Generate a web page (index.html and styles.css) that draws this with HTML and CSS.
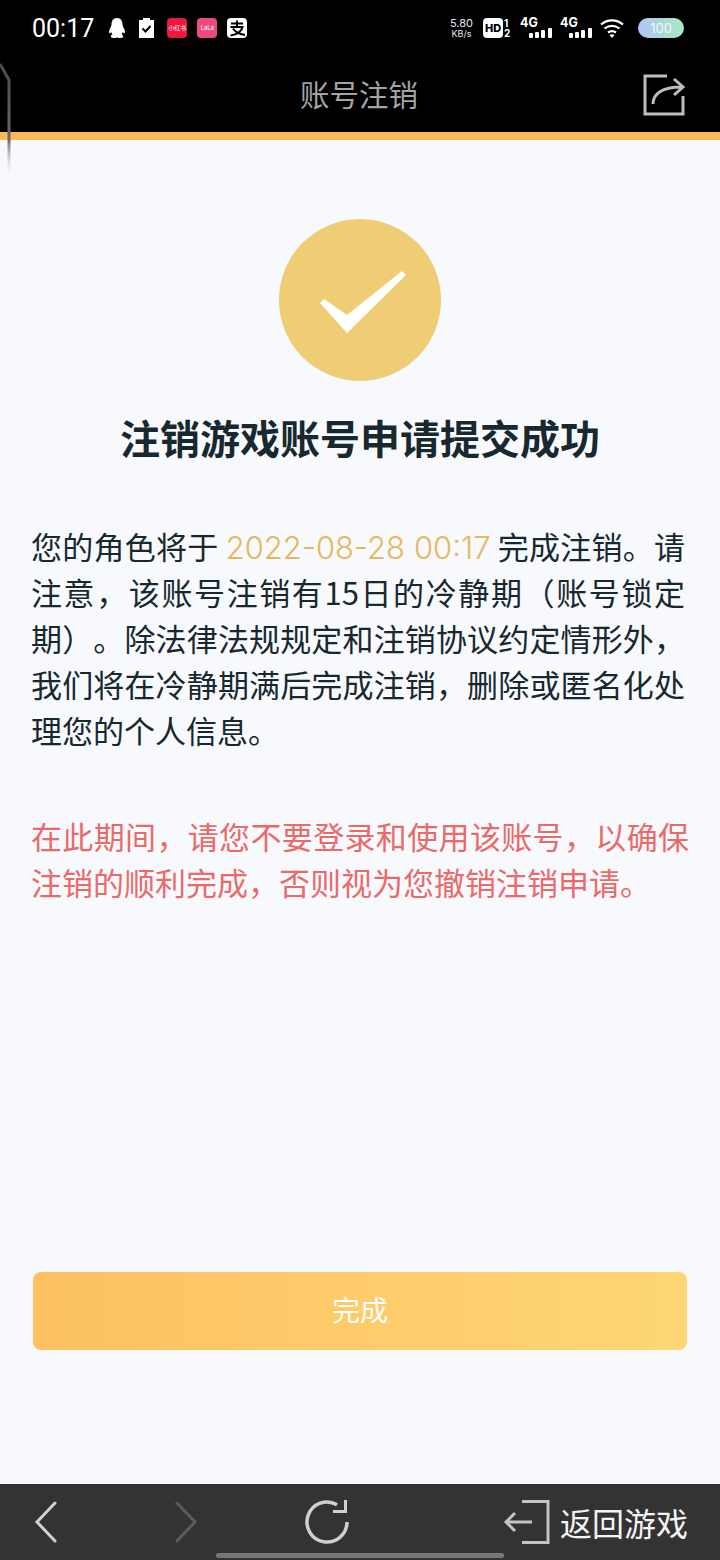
FILE: index.html
```html
<!DOCTYPE html>
<html lang="zh-CN">
<head>
    <meta charset="UTF-8">
    <meta name="viewport" content="width=device-width, initial-scale=1.0">
    <title>账号注销</title>
    <link rel="stylesheet" href="styles.css">
</head>
<body>
    <div class="screen">
        <div class="top-black">
            <div class="status-bar">
                <div class="status-left">
                    <span class="clock">00:17</span>
                    <svg class="st-qq" width="20" height="20" viewBox="0 0 20 20"><path d="M10 0C6 0 4.500 3 4.500 6.500C4.500 8 3.500 9 2.500 11.500C1.800 13.500 2 15.300 2.800 15.300C3.300 15.300 3.800 14.500 4.200 14C4.400 15 4.900 16 5.600 16.600C4.600 17 3.800 17.600 3.800 18.400C3.800 19.500 5.800 20 7.500 20C8.700 20 9.500 19.600 10 19.200C10.500 19.600 11.300 20 12.500 20C14.200 20 16.200 19.500 16.200 18.400C16.200 17.600 15.400 17 14.400 16.600C15.100 16 15.600 15 15.800 14C16.200 14.500 16.700 15.300 17.200 15.300C18 15.300 18.200 13.500 17.500 11.500C16.500 9 15.500 8 15.500 6.500C15.500 3 14 0 10 0Z" fill="#fff"/></svg>
                    <svg class="st-clip" width="15" height="20" viewBox="0 0 15 20"><path d="M0 2H4V0H11V2H15V20H0Z" fill="#fff"/><path d="M3.500 10.500L6.500 13.500L11.500 8" fill="none" stroke="#000" stroke-width="2"/></svg>
                    <span class="app-badge badge-red">小红书</span>
                    <span class="app-badge badge-pink">LaLa</span>
                    <svg class="st-pay" width="20" height="20" viewBox="0 0 20 20"><rect width="20" height="20" rx="4" fill="#fff"/><path d="M4 5.500H16M10 2.500V8.500M3.500 9H15.500C15 12.500 11 16.500 3.500 17.500M6 10.500C8 14 12 16 18 17" fill="none" stroke="#000" stroke-width="2"/></svg>
                </div>
                <div class="status-right">
                    <div class="speed"><span>5.80</span><span>KB/s</span></div>
                    <span class="hd">HD</span>
                    <div class="sim-nums"><span>1</span><span>2</span></div>
                    <div class="signal"><span class="net">4G</span><svg width="24" height="10" viewBox="0 0 24 10"><rect x="1" y="5" width="4" height="5" rx="1" fill="#fff"/><rect x="7" y="4" width="4" height="6" rx="1" fill="#fff"/><rect x="13" y="2" width="4" height="8" rx="1" fill="#fff"/><rect x="20" y="0" width="4" height="10" rx="1" fill="#fff"/></svg></div>
                    <div class="signal"><span class="net">4G</span><svg width="24" height="10" viewBox="0 0 24 10"><rect x="1" y="5" width="4" height="5" rx="1" fill="#fff"/><rect x="7" y="4" width="4" height="6" rx="1" fill="#fff"/><rect x="13" y="2" width="4" height="8" rx="1" fill="#fff"/><rect x="20" y="0" width="4" height="10" rx="1" fill="#fff"/></svg></div>
                    <svg class="wifi" width="24" height="20" viewBox="0 0 24 20"><path d="M1 6.500C7.500 1 16.500 1 23 6.500M4.500 10.500C9 7 15 7 19.500 10.500M8 14.500C10.500 12.800 13.500 12.800 16 14.500" fill="none" stroke="#fff" stroke-width="2.200"/><path d="M12 20L9.500 17C11 16 13 16 14.500 17Z" fill="#fff"/></svg>
                    <span class="battery">100</span>
                </div>
            </div>
            <header class="title-bar">
                <h1>账号注销</h1>
                <svg class="share-icon" width="42" height="42" viewBox="0 0 42 42">
                    <path d="M24 2H2V40H40V22" fill="none" stroke="#bdbdbd" stroke-width="3"/>
                    <path d="M10 30C10 20 19 13 38 13M31 5L40 13L31 21" fill="none" stroke="#bdbdbd" stroke-width="3"/>
                </svg>
            </header>
        </div>

        <main class="content">
            <div class="success-icon">
                <svg width="162" height="162" viewBox="0 0 162 162"><path d="M41 84L45 80L68 96L123 52L127 56L68 114Z" fill="#fff"/></svg>
            </div>
            <h2>注销游戏账号申请提交成功</h2>
            <p class="info">您的角色将于 <span class="date">2022-08-28 00:17</span> 完成注销。请注意，该账号注销有15日的冷静期（账号锁定期）。除法律法规规定和注销协议约定情形外，我们将在冷静期满后完成注销，删除或匿名化处理您的个人信息。</p>
            <p class="warning">在此期间，请您不要登录和使用该账号，以确保注销的顺利完成，否则视为您撤销注销申请。</p>
            <button class="done-btn">完成</button>
        </main>

        <footer class="bottom-bar">
            <svg class="nav-back" width="24" height="42" viewBox="0 0 24 42"><path d="M21 2L3 21L21 40" fill="none" stroke="#d0d0d0" stroke-width="3" stroke-linecap="round"/></svg>
            <svg class="nav-forward" width="24" height="42" viewBox="0 0 24 42"><path d="M3 2L21 21L3 40" fill="none" stroke="#5c5c5c" stroke-width="3" stroke-linecap="round"/></svg>
            <svg class="nav-reload" width="46" height="46" viewBox="0 0 46 46"><path d="M43 23A20 20 0 1 1 33 5.700" fill="none" stroke="#d0d0d0" stroke-width="3.500"/><path d="M43 1V14H29V11H40V1Z" fill="#d0d0d0"/></svg>
            <div class="back-game">
                <svg width="48" height="44" viewBox="0 0 48 44"><path d="M20 1.500H46V42.500H20" fill="none" stroke="#c4c4c4" stroke-width="3"/><path d="M30 22H4M13 13L4 22L13 31" fill="none" stroke="#c4c4c4" stroke-width="3"/></svg>
                <span>返回游戏</span>
            </div>
        </footer>

        <svg class="edge-line" width="12" height="110" viewBox="0 0 12 110">
            <defs>
                <linearGradient id="edge-fade" x1="0" y1="0" x2="0" y2="1">
                    <stop offset="0" stop-color="#4a4a4a"/>
                    <stop offset="0.7" stop-color="#6a6a6a"/>
                    <stop offset="1" stop-color="#d8d8d8" stop-opacity="0.15"/>
                </linearGradient>
            </defs>
            <path d="M0 2L9 18V110" fill="none" stroke="url(#edge-fade)" stroke-width="3"/>
        </svg>
        <div class="home-bar"></div>
    </div>
</body>
</html>
```

FILE: styles.css
```css
* {
    box-sizing: border-box;
}

body {
    margin: 0;
    font-family: "Noto Sans CJK SC", "Noto Sans", sans-serif;
    background-color: #f7f9fd;
}

.screen {
    position: relative;
    width: 720px;
    height: 1560px;
    display: flex;
    flex-direction: column;
    overflow: hidden;
}

.top-black {
    background-color: #000;
    border-bottom: 8px solid #fdb858;
    height: 140px;
    flex-shrink: 0;
}

.status-bar {
    height: 54px;
    display: flex;
    justify-content: space-between;
    align-items: center;
    padding: 2px 36px 0 32px;
    color: #fff;
}

.status-left,
.status-right {
    display: flex;
    align-items: center;
}

.clock {
    font-family: "Roboto", sans-serif;
    font-size: 25px;
    margin-right: 13px;
}

.st-clip {
    margin-left: 12px;
}

.app-badge {
    width: 20px;
    height: 20px;
    margin-left: 13px;
    border-radius: 4px;
    color: #fff;
    font-size: 6px;
    line-height: 20px;
    text-align: center;
    white-space: nowrap;
    overflow: hidden;
}

.badge-red {
    background-color: #f0173c;
    margin-left: 13px;
}

.badge-pink {
    background-color: #ef4a7f;
    margin-left: 10px;
}

.st-pay {
    margin-left: 10px;
}

.speed {
    display: flex;
    flex-direction: column;
    align-items: center;
    font-family: "Inter", sans-serif;
    font-size: 11px;
    line-height: 11px;
    margin-right: 10px;
    color: #e8e8e8;
}

.speed span:last-child {
    font-size: 9px;
    line-height: 10px;
}

.hd {
    width: 20px;
    height: 20px;
    background-color: #fff;
    color: #000;
    border-radius: 4px;
    font-family: "Inter", sans-serif;
    font-size: 11px;
    font-weight: 800;
    line-height: 20px;
    text-align: center;
}

.sim-nums {
    display: flex;
    flex-direction: column;
    font-family: "Inter", sans-serif;
    font-size: 10px;
    font-weight: 700;
    line-height: 10px;
    margin: 0 8px 0 1px;
    width: 8px;
}

.signal {
    display: flex;
    flex-direction: column;
    width: 32px;
    margin-right: 8px;
    position: relative;
    height: 20px;
}

.signal svg {
    position: absolute;
    right: 0;
    bottom: 0;
}

.net {
    font-family: "Inter", sans-serif;
    font-size: 12.500px;
    font-weight: 700;
    line-height: 12px;
    margin-top: -1px;
}

.wifi {
    margin-left: 0;
}

.battery {
    width: 46px;
    height: 20px;
    margin-left: 14px;
    border-radius: 10px;
    background: linear-gradient(90deg, #b3c4f5, #a9e9c0);
    color: #f2f6f6;
    font-family: "Inter", sans-serif;
    font-size: 13px;
    line-height: 20px;
    text-align: center;
}

.title-bar {
    position: relative;
    height: 78px;
    display: flex;
    align-items: center;
    justify-content: center;
    padding: 0 2px 0 0;
}

.title-bar h1 {
    margin: 0;
    font-size: 29.500px;
    font-weight: 400;
    color: #a4a4a4;
}

.share-icon {
    position: absolute;
    left: 643px;
    top: 20px;
}

.content {
    flex: 1;
    display: flex;
    flex-direction: column;
    align-items: center;
    padding: 79px 31px 0;
    color: #17282f;
}

.success-icon {
    width: 162px;
    height: 162px;
    border-radius: 50%;
    background-color: #eecd75;
}

.success-icon svg {
    display: block;
}

.content h2 {
    margin: 24px 0 0;
    font-size: 40px;
    line-height: 64px;
    font-weight: 700;
    text-align: center;
}

.info,
.warning {
    width: 100%;
    margin: 0;
    font-size: 31px;
    line-height: 46px;
    text-align: justify;
    text-spacing-trim: space-all;
}

.info {
    margin-top: 54px;
    padding-right: 4px;
}

.date {
    color: #e6b85c;
    font-family: "Inter", sans-serif;
    font-weight: 300;
    line-height: 0;
}

.warning {
    margin-top: 60px;
    color: #ea6a6a;
}

.done-btn {
    margin-top: auto;
    margin-bottom: 134px;
    width: 654px;
    height: 78px;
    padding: 0 0 4px;
    border: none;
    border-radius: 8px;
    background: linear-gradient(90deg, #fdc161, #fed674);
    color: #fff;
    font-family: inherit;
    font-size: 28px;
}

.bottom-bar {
    height: 76px;
    flex-shrink: 0;
    background-color: #333;
    display: flex;
    align-items: center;
    padding: 0 32px 0 34px;
}

.nav-forward {
    margin-left: 116px;
}

.nav-reload {
    margin-left: 106px;
}

.back-game {
    margin-left: auto;
    display: flex;
    align-items: center;
    gap: 10px;
    color: #f4f4f4;
    font-size: 32px;
}

.edge-line {
    position: absolute;
    left: 0;
    top: 62px;
}

.home-bar {
    position: absolute;
    left: 216px;
    bottom: 2px;
    width: 288px;
    height: 5px;
    border-radius: 3px;
    background-color: #777;
}
```
